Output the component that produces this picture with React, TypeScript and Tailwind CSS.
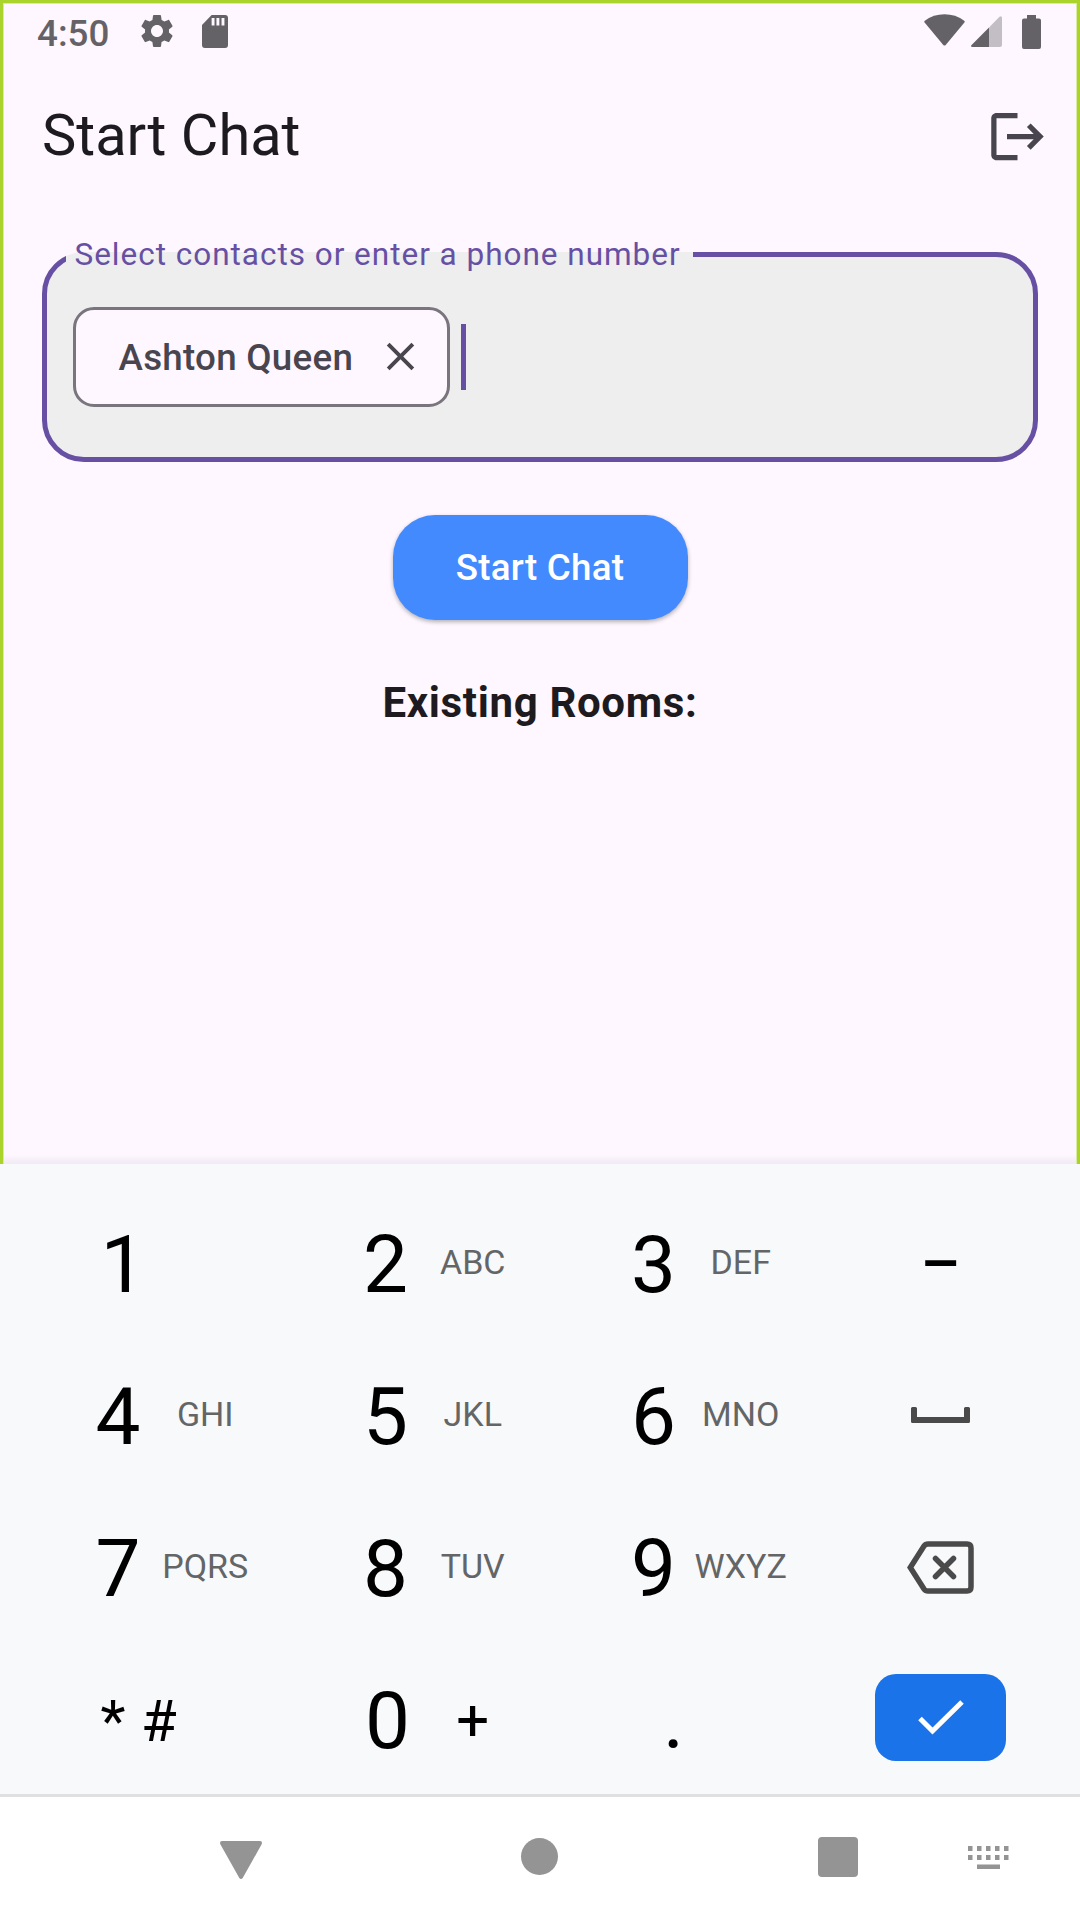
import type { ReactNode } from "react";

function GearIcon() {
  return (
    <svg className="mb-px ml-[28px] size-[40px]" viewBox="0 0 24 24" fill="currentColor">
      <path d="M19.14 12.94c.04-.3.06-.61.06-.94 0-.32-.02-.64-.07-.94l2.03-1.58c.18-.14.23-.41.12-.61l-1.92-3.32c-.12-.22-.37-.29-.59-.22l-2.39.96c-.5-.38-1.03-.7-1.62-.94l-.36-2.54c-.04-.24-.24-.41-.48-.41h-3.84c-.24 0-.43.17-.47.41l-.36 2.54c-.59.24-1.13.57-1.62.94l-2.39-.96c-.22-.08-.47 0-.59.22L2.74 8.87c-.12.21-.08.47.12.61l2.03 1.58c-.05.3-.09.63-.09.94s.02.64.07.94l-2.03 1.58c-.18.14-.23.41-.12.61l1.92 3.32c.12.22.37.29.59.22l2.39-.96c.5.38 1.03.7 1.62.94l.36 2.54c.05.24.24.41.48.41h3.84c.24 0 .44-.17.47-.41l.36-2.54c.59-.24 1.13-.56 1.62-.94l2.39.96c.22.08.47 0 .59-.22l1.92-3.32c.12-.22.07-.47-.12-.61l-2.01-1.58zM12 15.6c-1.98 0-3.6-1.62-3.6-3.6s1.62-3.6 3.6-3.6 3.6 1.62 3.6 3.6-1.62 3.6-3.6 3.6z" />
    </svg>
  );
}

function StatusBar() {
  return (
    <div className="flex h-[63px] items-center pr-[39px] pl-[37px] text-[#656267]">
      <span className="mt-[4px] w-[72px] text-[36.75px] leading-[44px] font-medium whitespace-nowrap">4:50</span>
      <GearIcon />
      <svg className="ml-[25px] h-[33px] w-[26px]" viewBox="0 0 27 33" preserveAspectRatio="none" fill="currentColor">
        <path
          fillRule="evenodd"
          d="M10 0H24A3 3 0 0 1 27 3V30A3 3 0 0 1 24 33H3A3 3 0 0 1 0 30V10ZM10 3V10.5H13V3ZM15 3V10.5H18V3ZM20.3 3V10.5H23.3V3Z"
        />
      </svg>
      <svg className="mb-[3px] ml-auto h-[33px] w-[41px]" viewBox="0 0 41 33" fill="currentColor">
        <path d="M.6 8.600Q-.2 7.600 .8 6.700Q9.500 .3 20.500 .3T40.200 6.700Q41.200 7.600 40.400 8.600L21.700 31Q20.500 32.200 19.300 31Z" />
      </svg>
      <svg className="ml-[6px] h-[31px] w-[31px]" viewBox="0 0 31 31" fill="currentColor">
        <path opacity=".38" d="M18 11.500L28.500 .7Q31 -.8 31 2V29Q31 31 29 31H18Z" />
        <path d="M18 11.500V31H1.500Q-1 30.500 .6 28.900Z" />
      </svg>
      <svg className="ml-[20px] h-[34px] w-[19px]" viewBox="0 0 19 34" fill="currentColor">
        <path d="M5 0H14V3.500H17Q19 3.500 19 5.500V32Q19 34 17 34H2Q0 34 0 32V5.500Q0 3.500 2 3.500H5Z" />
      </svg>
    </div>
  );
}

function AppBar() {
  return (
    <header className="flex h-[147px] items-center justify-between pr-[31.500px] pl-[42px]">
      <h1 className="mb-[4px] text-[57.75px] leading-[74px] font-normal text-[#1d1b20]">Start Chat</h1>
      <svg className="mb-px size-[63px] text-[#49454f]" viewBox="0 0 24 24" fill="currentColor">
        <path d="M17 7l-1.410 1.410L18.170 11H8v2h10.170l-2.580 2.580L17 17l5-5zM4 5h8V3H4c-1.100 0-2 .9-2 2v14c0 1.100.9 2 2 2h8v-2H4V5z" />
      </svg>
    </header>
  );
}

function ContactField() {
  return (
    <fieldset className="h-[226px] w-[996px] rounded-[42px] border-[5px] border-[#6750a4] bg-[#eeeeee] pl-[19px]">
      <legend className="h-[37px] w-[627px] pl-[8.500px] text-[31.5px] leading-[37px] tracking-[0.980px] whitespace-nowrap text-[#6750a4]">
        Select contacts or enter a phone number
      </legend>
      <div className="mt-[34px] ml-[7px] flex items-center">
        <div className="flex h-[100px] w-[377px] items-center rounded-[21px] border-[3px] border-[#79747e] bg-[#fef7ff] pl-[42.500px] text-[#49454f]">
          <span className="mt-px w-[236px] text-[36.75px] leading-[52px] font-medium tracking-[0.26px] whitespace-nowrap">
            Ashton Queen
          </span>
          <svg className="mb-px ml-[22px] size-[47px]" viewBox="0 0 24 24" fill="currentColor">
            <path d="M19 6.410L17.590 5 12 10.590 6.410 5 5 6.410 10.590 12 5 17.590 6.410 19 12 13.410 17.590 19 19 17.590 13.410 12z" />
          </svg>
        </div>
        <div className="ml-[11px] h-[66px] w-[5px] bg-[#6750a4]" />
      </div>
    </fieldset>
  );
}

function Key({ digit, children }: { digit: string; children?: ReactNode }) {
  return (
    <div className="flex items-center">
      <span className="w-[45px] text-center text-[80px] leading-[94px] text-black">{digit}</span>
      <span className="mb-[7px] w-[129.500px] text-center text-[34px] leading-[40px] text-[#636566]">{children}</span>
    </div>
  );
}

function Keypad() {
  return (
    <section className="grid h-[633px] grid-cols-[267.500px_268px_244px_131px] grid-rows-[152px_152px_152px_152px] border-b-[3px] border-[#e0e0e0] bg-[#f8f9fb] pt-[25px] pl-[95.500px]">
      <div className="flex pl-[5px]">
        <Key digit="1" />
      </div>
      <Key digit="2">ABC</Key>
      <Key digit="3">DEF</Key>
      <div className="flex items-center justify-center pb-[4px] text-[62px] font-medium text-black">–</div>

      <Key digit="4">GHI</Key>
      <Key digit="5">JKL</Key>
      <Key digit="6">MNO</Key>
      <div className="flex items-center justify-center pb-[5px]">
        <svg className="h-[16px] w-[59px]" viewBox="0 0 59 16" fill="#4a4a4a">
          <path d="M1.500 0H4.500Q6 0 6 1.500V10H53V1.500Q53 0 54.500 0H57.500Q59 0 59 1.500V14.500Q59 16 57.500 16H1.500Q0 16 0 14.500V1.500Q0 0 1.500 0Z" />
        </svg>
      </div>

      <Key digit="7">PQRS</Key>
      <Key digit="8">TUV</Key>
      <Key digit="9">WXYZ</Key>
      <div className="flex items-center justify-center pb-[3px]">
        <svg className="h-[53px] w-[67px]" viewBox="0 0 67 53" fill="none" stroke="#4a4a4a" strokeWidth="5.500">
          <path d="M21 2.900H60Q64 2.900 64 6.900V46.100Q64 50.100 60 50.100H21Q18.500 50.100 17 48L3.300 26.500L17 5Q18.500 2.900 21 2.900Z" />
          <path strokeLinecap="round" d="M28.500 17.500L46.500 35.500M46.500 17.500L28.500 35.500" />
        </svg>
      </div>

      <div className="flex items-center pb-px pl-[5px] text-[58px] leading-[68px] text-black">
        <span className="w-[40.500px]">*</span>
        <span>#</span>
      </div>
      <div className="flex pl-[2px]">
        <Key digit="0">
          <span className="relative top-[6px] right-[2px] text-[58px] text-black">+</span>
        </Key>
      </div>
      <div className="flex items-center pl-[32px] text-[80px] leading-[94px] text-black">.</div>
      <div className="flex items-center justify-center pb-[7px]">
        <button className="flex h-[87px] w-[131px] items-center justify-center rounded-[21px] bg-[#1a73e8]">
          <svg className="h-[35px] w-[46px]" viewBox="0 0 46 35" fill="none" stroke="white" strokeWidth="5">
            <path d="M2 18.500L14.500 31L44 2" />
          </svg>
        </button>
      </div>
    </section>
  );
}

function NavigationBar() {
  return (
    <nav className="flex h-[123px] items-center bg-white pl-[220px] text-[#949494]">
      <svg className="mt-[3px] h-[38px] w-[42px]" viewBox="0 0 42 38" fill="currentColor">
        <path d="M2 0H40Q43 .5 41.500 3.500L23 36.500Q21 39.500 19 36.500L.5 3.500Q-1 .5 2 0Z" />
      </svg>
      <div className="mb-[4px] ml-[259px] size-[37px] rounded-full bg-[#949494]" />
      <div className="mb-[3px] ml-[260px] h-[40px] w-[40px] rounded-[4px] bg-[#949494]" />
      <svg className="mb-[2px] ml-[110px] h-[24px] w-[41px]" viewBox="0 0 41 24" fill="currentColor">
        {[0, 9, 18, 27, 36].map((x) => (
          <g key={x}>
            <rect x={x} y="0" width="4.500" height="5" />
            <rect x={x} y="9" width="4.500" height="5" />
          </g>
        ))}
        <rect x="9" y="18.500" width="23" height="4.500" />
      </svg>
    </nav>
  );
}

export default function App() {
  return (
    <div className="h-[1920px] w-[1080px] overflow-hidden bg-white font-[Roboto,sans-serif]">
      <main className="flex h-[1164px] flex-col bg-[#fef7ff] bg-[linear-gradient(to_top,#f1e9f3,#fef7ff_9px)] shadow-[inset_3px_0_#aad42c,inset_-3px_0_#aad42c,inset_0_3px_#aad42c,inset_4px_0_#daeba0,inset_-4px_0_#daeba0,inset_0_4px_#daeba0]">
        <StatusBar />
        <AppBar />
        <div className="flex flex-col items-center pt-[26px]">
          <ContactField />
          <button className="mt-[52.500px] h-[105px] w-[295px] rounded-[42px] bg-[#448aff] pt-px text-[36.75px] leading-[52px] font-medium tracking-[0.26px] text-white shadow-[0_2px_4px_rgba(0,0,0,0.3)]">
            Start Chat
          </button>
          <h2 className="mt-[53.500px] text-[42px] leading-[60px] font-bold tracking-[0.650px] text-[#1d1b20]">Existing Rooms:</h2>
        </div>
      </main>
      <Keypad />
      <NavigationBar />
    </div>
  );
}
